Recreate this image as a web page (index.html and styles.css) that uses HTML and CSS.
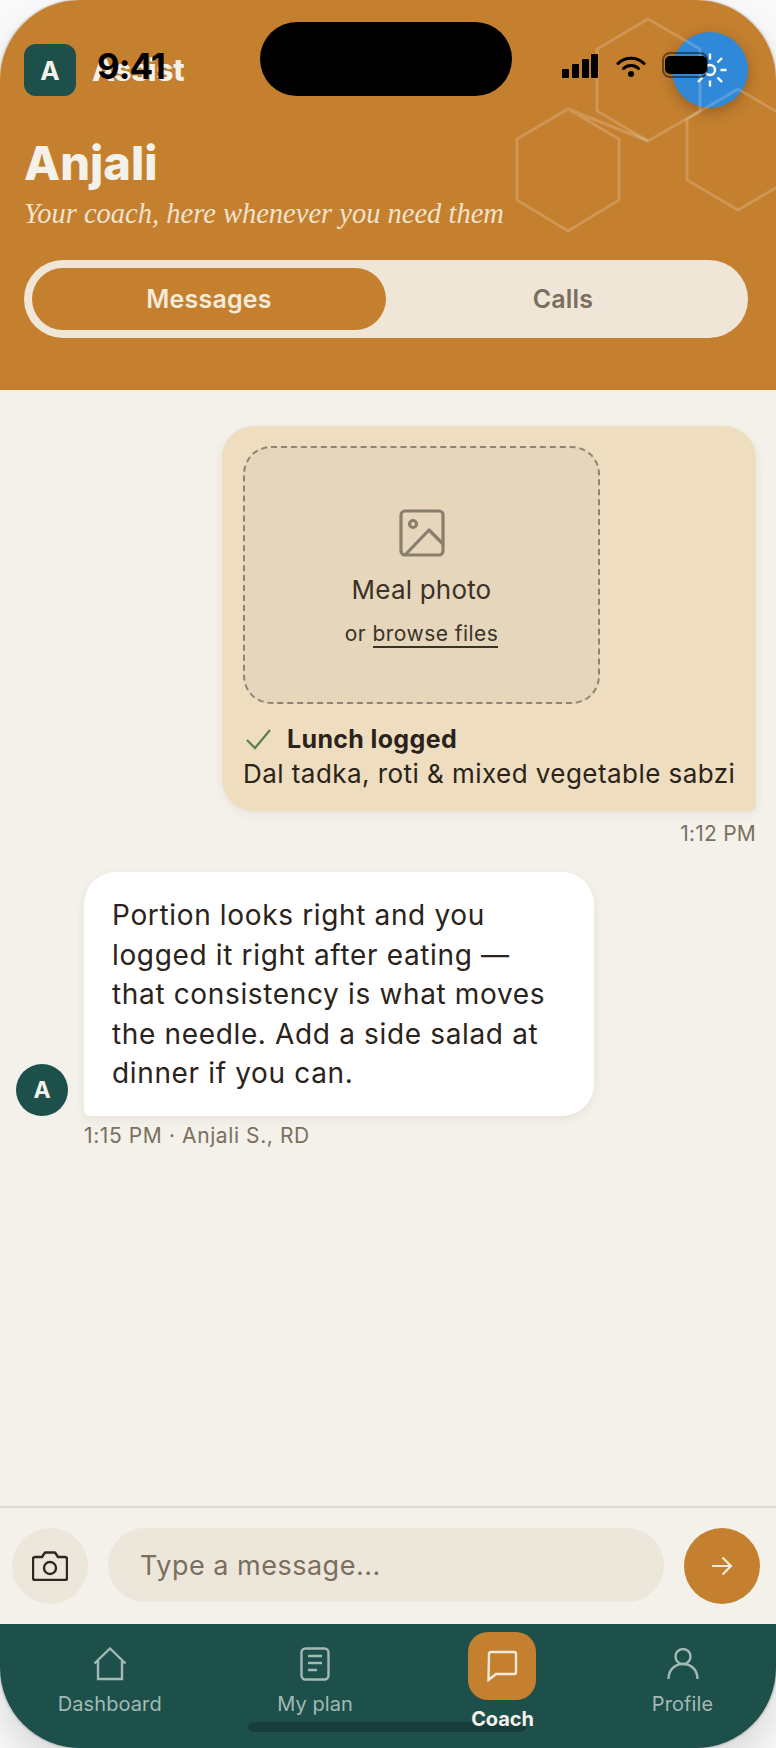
FILE: index.html
```html
<!DOCTYPE html>
<html>
<head>
	<meta charset="UTF-8">
	<title>Coach</title>
	<link rel="stylesheet" href="styles.css">
</head>
<body>
<div class="phone">

	<!-- status bar sits over the header -->
	<div class="island"></div>
	<div class="clock">9:41</div>
	<div class="status-icons">
		<svg width="36" height="24" viewBox="0 0 36 24"><rect x="0" y="15" width="7" height="9" rx="1"/><rect x="10" y="10" width="7" height="14" rx="1"/><rect x="20" y="5" width="7" height="19" rx="1"/><rect x="29" y="0" width="7" height="24" rx="1"/></svg>
		<svg class="wifi" width="30" height="24" viewBox="0 0 30 24" fill="none" stroke="#000" stroke-width="3" stroke-linecap="round"><path d="M2 9.500C9 2.500 21 2.500 28 9.500"/><path d="M7.500 14.500C11.500 10.500 18.500 10.500 22.500 14.500"/><circle cx="15" cy="20" r="3" fill="#000" stroke="none"/></svg>
		<div class="battery"><div class="battery-fill"></div></div>
	</div>

	<header class="top">
		<svg class="hexes" width="776" height="240" viewBox="0 0 776 240" fill="none"><path d="M648 19L700 49V111L648 141L597 111V49Z"/><path d="M568 109L619 139V200L568 231L517 200V139L568 109L648 141"/><path d="M738 89L789 119V180L738 210L687 180V119Z"/></svg>
		<div class="brand">
			<div class="logo">A</div>
			<div class="brand-name">Assist</div>
		</div>
		<button class="theme-btn">
			<svg width="36" height="36" viewBox="0 0 36 36" fill="none" stroke="#fff" stroke-width="2.400"><circle cx="18" cy="18" r="5"/><path d="M18 1.500V7.500M18 28.500V34.500M1.500 18H7.500M28.500 18H34.500M6 6L10.500 10.500M25.500 25.500L30 30M6 30L10.500 25.500M25.500 10.500L30 6"/></svg>
		</button>
		<h1 class="coach-name">Anjali</h1>
		<p class="coach-sub">Your coach, here whenever you need them</p>
		<div class="segment">
			<div class="seg-item seg-on">Messages</div>
			<div class="seg-item">Calls</div>
		</div>
	</header>

	<main class="chat">
		<div class="msg-out">
			<div class="bubble-out">
				<div class="drop">
					<svg width="48" height="48" viewBox="0 0 48 48" fill="none" stroke="#8a7e6d" stroke-width="3.200"><rect x="3" y="2" width="42" height="44" rx="4"/><circle cx="15" cy="15" r="3.500"/><path d="M7 46L31 21L45 35" stroke-linejoin="round"/></svg>
					<div class="drop-title">Meal photo</div>
					<div class="drop-sub">or <span class="drop-link">browse files</span></div>
				</div>
				<div class="logged">
					<svg width="26" height="22" viewBox="0 0 26 22" fill="none" stroke="#5d7f4e" stroke-width="2.200"><path d="M1 12L9 20L24 2"/></svg>
					<span>Lunch logged</span>
				</div>
				<div class="meal">Dal tadka, roti &amp; mixed vegetable sabzi</div>
			</div>
			<div class="time time-out">1:12 PM</div>
		</div>

		<div class="msg-in">
			<div class="msg-row">
				<div class="avatar">A</div>
				<div class="bubble-in">Portion looks right and you logged it right after eating — that consistency is what moves the needle. Add a side salad at dinner if you can.</div>
			</div>
			<div class="time time-in">1:15 PM · Anjali S., RD</div>
		</div>
	</main>

	<div class="composer">
		<button class="round cam">
			<svg width="36" height="30" viewBox="0 0 36 30" fill="none" stroke="#2e2820" stroke-width="2.400" stroke-linejoin="round"><path d="M3 6H10L13 1.500H23L26 6H33Q35 6 35 8V27Q35 29 33 29H3Q1 29 1 27V8Q1 6 3 6Z"/><circle cx="18" cy="17" r="6"/></svg>
		</button>
		<div class="input">Type a message...</div>
		<button class="round send">
			<svg width="22" height="20" viewBox="0 0 22 20" fill="none" stroke="#f4ead9" stroke-width="2.200"><path d="M1 10H20M11.500 1.500L20 10L11.500 18.500"/></svg>
		</button>
	</div>

	<nav class="tabs">
		<div class="tab">
			<svg class="tab-icon" width="34" height="34" viewBox="0 0 34 34" fill="none" stroke="#a3bab4" stroke-width="2.400"><path d="M1.500 16.500L17 1.500L32.500 16.500M5 14V32H29V14"/></svg>
			<span>Dashboard</span>
		</div>
		<div class="tab">
			<svg class="tab-icon" width="30" height="34" viewBox="0 0 30 34" fill="none" stroke="#a3bab4" stroke-width="2.400"><rect x="1.500" y="1.500" width="27" height="31" rx="4"/><path d="M8 9H22M8 16H22M8 23H17"/></svg>
			<span>My plan</span>
		</div>
		<div class="tab tab-on">
			<div class="tab-tile">
				<svg width="32" height="32" viewBox="0 0 32 32" fill="none" stroke="#f4ead9" stroke-width="2.400"><path d="M3 4Q3 2 5 2H28Q30 2 30 4V22Q30 24 28 24H10L2.500 30Z"/></svg>
			</div>
			<span>Coach</span>
		</div>
		<div class="tab">
			<svg class="tab-icon" width="32" height="34" viewBox="0 0 32 34" fill="none" stroke="#a3bab4" stroke-width="2.400"><circle cx="16" cy="9.500" r="7.500"/><path d="M1.500 32C1.500 12 30.500 12 30.500 32"/></svg>
			<span>Profile</span>
		</div>
	</nav>
	<div class="home-bar"></div>
</div>
</body>
</html>
```

FILE: styles.css
```css
* { box-sizing: border-box; }
html, body { margin: 0; padding: 0; height: 100%; }
body {
	background: #fafafa;
	overflow: hidden;
	font-family: "Inter", "Liberation Sans", sans-serif;
}
button { border: 0; padding: 0; font: inherit; }

.phone {
	position: relative;
	width: 776px;
	height: 1748px;
	display: flex;
	flex-direction: column;
	background: #f4f1ea;
	border-radius: 80px;
	overflow: hidden;
	box-shadow: 0 0 2px 1px rgba(0,0,0,.18), 0 20px 40px rgba(0,0,0,.14);
}

/* status bar */
.island {
	position: absolute;
	left: 260px;
	top: 22px;
	width: 252px;
	height: 74px;
	background: #000;
	border-radius: 37px;
	z-index: 5;
}
.clock {
	position: absolute;
	left: 97px;
	top: 44px;
	font-size: 35px;
	line-height: 44px;
	font-weight: 700;
	letter-spacing: -1px;
	color: #000;
	z-index: 5;
}
.status-icons {
	position: absolute;
	left: 562px;
	top: 54px;
	display: flex;
	align-items: flex-start;
	gap: 18px;
	z-index: 5;
}
.battery {
	width: 46px;
	height: 26px;
	margin-top: -2px;
	margin-left: -2px;
	padding: 2px 0 2px 1px;
	border: 2px solid rgba(0,0,0,.45);
	border-radius: 8px;
}
.battery-fill { width: 42px; height: 100%; background: #000; border-radius: 5px; }

/* header */
.top {
	position: relative;
	height: 390px;
	padding: 44px 28px 0 24px;
	background: #c47f2f;
	flex: none;
}
.hexes {
	position: absolute;
	left: 0;
	top: 0;
	z-index: 2;
	stroke: rgba(244,234,217,.22);
	stroke-width: 3;
}
.brand { display: flex; align-items: center; gap: 16px; }
.logo {
	width: 52px;
	height: 52px;
	display: flex;
	align-items: center;
	justify-content: center;
	background: #1d4f4b;
	color: #f4f1ea;
	border-radius: 12px;
	font-size: 26px;
	font-weight: 700;
}
.brand-name { font-size: 30px; font-weight: 800; letter-spacing: -.3px; color: #f4f1ea; }
.theme-btn {
	position: absolute;
	left: 672px;
	top: 32px;
	width: 76px;
	height: 76px;
	display: flex;
	align-items: center;
	justify-content: center;
	background: #2f88d8;
	border-radius: 50%;
	box-shadow: 0 4px 14px rgba(0,0,0,.25);
}
.coach-name {
	margin: 40px 0 0;
	font-size: 47px;
	line-height: 54px;
	font-weight: 800;
	color: #f4f1ea;
}
.coach-sub {
	margin: 6px 0 0;
	font-family: "Liberation Serif", serif;
	font-style: italic;
	font-size: 28.500px;
	line-height: 36px;
	color: #f0e2cb;
	white-space: nowrap;
}
.segment {
	position: relative;
	z-index: 3;
	display: flex;
	margin-top: 28px;
	padding: 8px;
	background: #f0e6d8;
	border-radius: 39px;
}
.seg-item {
	flex: 1;
	height: 62px;
	display: flex;
	align-items: center;
	justify-content: center;
	font-size: 25px;
	font-weight: 600;
	letter-spacing: .2px;
	color: #7a6f5f;
	border-radius: 31px;
}
.seg-on { background: #c47f2f; color: #f4ead9; }

/* chat */
.chat {
	flex: 1;
	display: flex;
	flex-direction: column;
	padding: 36px 20px 0 16px;
}
.msg-out { align-self: flex-end; display: flex; flex-direction: column; align-items: flex-end; width: 534px; }
.bubble-out {
	width: 100%;
	padding: 20px 15px 20px 21px;
	background: #eeddbe;
	border-radius: 32px 32px 6px 32px;
	box-shadow: 0 3px 10px rgba(60,40,10,.07);
}
.drop {
	width: 357px;
	height: 258px;
	padding-top: 6px;
	display: flex;
	flex-direction: column;
	align-items: center;
	justify-content: center;
	background: #e6d6bb;
	border: 2px dashed #8f8472;
	border-radius: 28px;
	color: #3a3228;
}
.drop-title { margin-top: 16px; font-size: 26px; line-height: 34px; letter-spacing: .2px; }
.drop-sub { margin-top: 13px; font-size: 21px; line-height: 28px; letter-spacing: .45px; }
.drop-link { border-bottom: 2px solid #3a3228; }
.logged {
	display: flex;
	align-items: center;
	gap: 15px;
	margin-top: 17px;
	padding-left: 3px;
	font-size: 25px;
	line-height: 36px;
	font-weight: 700;
	letter-spacing: .35px;
	color: #2a231b;
}
.meal { font-size: 26px; line-height: 34px; letter-spacing: .45px; color: #2a231b; white-space: nowrap; }
.time { font-size: 21px; line-height: 28px; letter-spacing: .6px; color: #7a6f5f; }
.time-out { margin-top: 9px; letter-spacing: .2px; }
.msg-in { margin-top: 24px; }
.msg-row { display: flex; align-items: flex-end; gap: 16px; }
.avatar {
	width: 52px;
	height: 52px;
	display: flex;
	align-items: center;
	justify-content: center;
	background: #1d4f4b;
	color: #f4f1ea;
	border-radius: 50%;
	font-size: 23px;
	font-weight: 700;
}
.bubble-in {
	width: 510px;
	padding: 24px 34px 22px 28px;
	background: #fff;
	border-radius: 32px 32px 32px 6px;
	font-size: 28px;
	line-height: 39.600px;
	letter-spacing: .65px;
	color: #2a231b;
	box-shadow: 0 3px 10px rgba(60,40,10,.07);
}
.time-in { margin: 6px 0 0 68px; }

/* composer */
.composer {
	flex: none;
	height: 118px;
	display: flex;
	align-items: flex-start;
	gap: 20px;
	padding: 20px 16px 0 12px;
	border-top: 2px solid #e0dbd1;
}
.round {
	flex: none;
	width: 76px;
	height: 76px;
	display: flex;
	align-items: center;
	justify-content: center;
	border-radius: 50%;
}
.cam { background: #ede6da; }
.send { background: #c47f2f; }
.input {
	flex: 1;
	height: 74px;
	display: flex;
	align-items: center;
	padding-left: 32px;
	background: #ede6da;
	border-radius: 37px;
	font-size: 27px;
	letter-spacing: .5px;
	color: #7a6f5f;
}

/* bottom nav */
.tabs {
	flex: none;
	height: 124px;
	padding-right: 5px;
	display: flex;
	justify-content: space-around;
	background: #1d4f4b;
	color: #a3bab4;
}
.tab {
	position: relative;
	z-index: 2;
	display: flex;
	flex-direction: column;
	align-items: center;
	padding-top: 23px;
	font-size: 20px;
	line-height: 28px;
	letter-spacing: .1px;
}
.tab-icon { height: 34px; margin-bottom: 9px; }
.tab-tile {
	width: 68px;
	height: 68px;
	display: flex;
	align-items: center;
	justify-content: center;
	background: #c47f2f;
	border-radius: 20px;
}
.tab-on { padding-top: 8px; color: #f4f1ea; font-weight: 700; letter-spacing: -.1px; }
.tab-on span { margin-top: 5px; }
.home-bar {
	position: absolute;
	left: 248px;
	top: 1722px;
	width: 278px;
	height: 10px;
	background: #173e3b;
	border-radius: 5px;
}
```
